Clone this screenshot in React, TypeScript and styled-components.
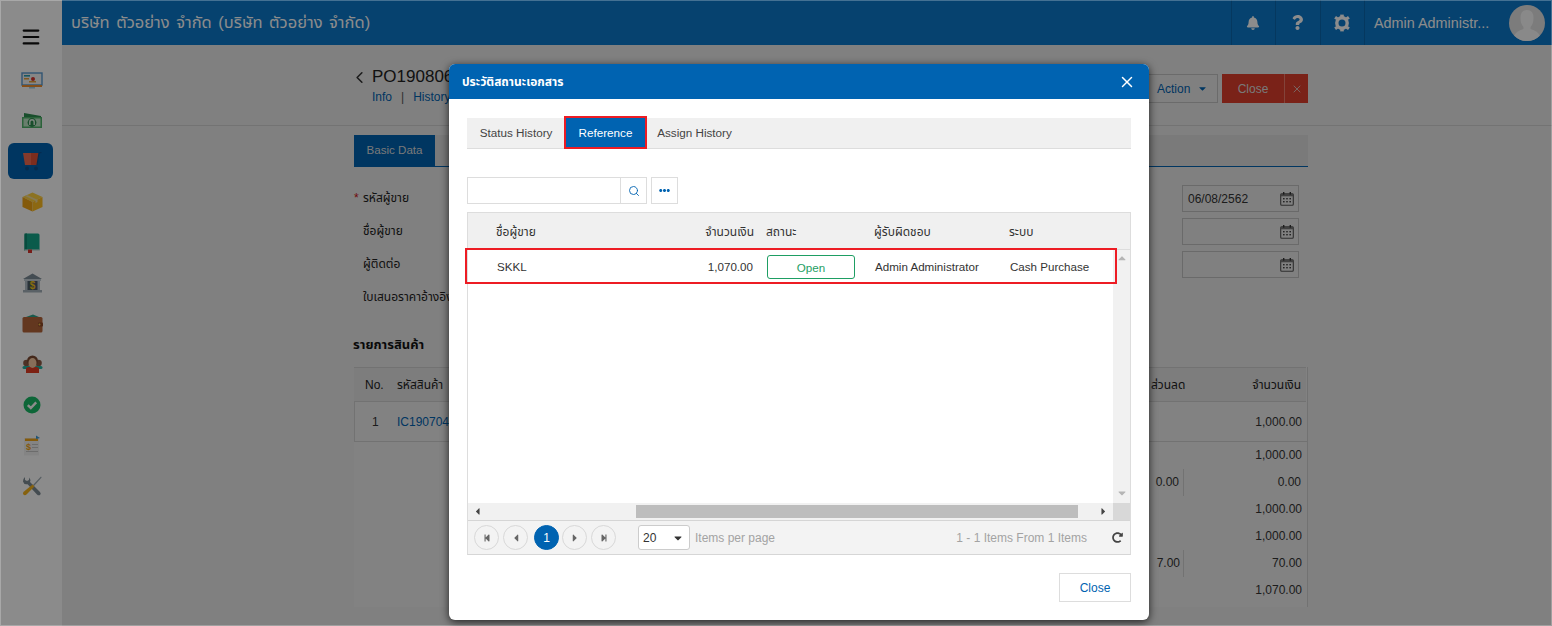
import React from "react";
import styled, { createGlobalStyle } from "styled-components";
import { FaBell, FaQuestion, FaEllipsisH, FaCaretDown, FaRedoAlt, FaStepBackward, FaStepForward, FaCaretLeft, FaCaretRight, FaCaretUp } from "react-icons/fa";
import { X, ChevronLeft, Menu, Search } from "lucide-react";

const Global = createGlobalStyle`
  html, body { margin: 0; padding: 0; background: #e9e9e9; }
  * { box-sizing: border-box; }
  body { font-family: "Liberation Sans", "Noto Sans Thai", "Noto Sans", sans-serif; font-size: 12px; color: #333; }
`;

const Root = styled.div`position: relative; width: 1552px; height: 626px; overflow: hidden; display: flex; background: #e9e9e9;`;
const Sidebar = styled.nav`width: 62px; height: 100%; flex: none; background: #fdfdfd; display: flex; flex-direction: column; align-items: flex-start; padding: 26px 0 0 8px;`;
const MenuButton = styled.div`height: 34px; width: 46px; display: flex; align-items: flex-start; justify-content: center; color: #111;`;
const NavItem = styled.div<{ $active?: boolean }>`
  width: 45px; height: 40.6px; display: flex; align-items: center; justify-content: center; position: relative;
  &::before { content: ""; display: ${p => (p.$active ? "block" : "none")}; position: absolute; inset: 2.3px 0; background: #0063b1; border-radius: 6px; }
  svg { position: relative; margin-left: 3px; }
`;
const Main = styled.div`flex: 1; min-width: 0; display: flex; flex-direction: column;`;
const TopBar = styled.header`height: 45px; background: #0b78ca; display: flex; align-items: center; color: #fff;`;
const BrandTitle = styled.div`flex: 1; padding-left: 9px; font-size: 16.5px; word-spacing: 2px; white-space: nowrap;`;
const TopCell = styled.div`width: 44.5px; height: 100%; border-left: 1px solid #0a66ad; display: flex; align-items: center; justify-content: center; font-size: 17px;`;
const UserCell = styled.div`height: 100%; border-left: 1px solid #0a66ad; display: flex; align-items: center; padding: 0 7px 0 9px; width: 188px; justify-content: space-between; font-size: 14.4px;`;
const Avatar = styled.div`width: 36px; height: 36px; border-radius: 50%; background: #e2e2e2; overflow: hidden; flex: none;`;

const PageHead = styled.div`height: 81px; flex: none; border-bottom: 1px solid #d2d2d2; padding: 29px 244px 0 292px; display: flex; justify-content: space-between; align-items: flex-start;`;
const HeadLeft = styled.div`display: flex; align-items: flex-start; gap: 3px;`;
const BackIcon = styled.div`color: #333; margin-top: -6px; margin-left: -4px;`;
const DocTitle = styled.div`font-size: 17px; line-height: 24px; color: #222; margin-top: -9px;`;
const DocLinks = styled.div`font-size: 12px; line-height: 16px; color: #0063b1; margin-top: 0; span { color: #555; margin: 0 9px; }`;
const HeadActions = styled.div`display: flex; align-items: stretch; height: 29px;`;
const ActionBtn = styled.div`width: 70px; padding-left: 8px; border: 1px solid #c4c4c4; display: flex; align-items: center; gap: 7px; color: #0063b1; margin-right: 4px;`;
const CloseBtn = styled.div`width: 62px; background: #de3f2c; color: #ddd; display: flex; align-items: center; justify-content: center;`;
const CloseX = styled.div`width: 24px; background: #de3f2c; color: #ddd; border-left: 1px solid #ef7a6a; display: flex; align-items: center; justify-content: center;`;

const Content = styled.div`padding: 9px 244px 0 292px; flex: 1; min-height: 0;`;
const TabBar = styled.div`height: 32px; background: #dedede; border-bottom: 1px solid #0063b1; display: flex;`;
const PageTab = styled.div`width: 81px; height: 31px; padding-bottom: 3px; background: #0063b1; color: #ddd; font-size: 11.6px; display: flex; align-items: center; justify-content: center;`;
const Form = styled.div`padding-top: 18px;`;
const FormRow = styled.div`height: 33px; display: flex; justify-content: space-between; padding-right: 9px;`;
const FieldLabel = styled.div`line-height: 26px; padding-left: 9px; position: relative; color: #222; white-space: nowrap;
  em { position: absolute; left: 0; top: 0; color: #c11; font-style: normal; }`;
const DateInput = styled.div`width: 117px; height: 27px; border: 1px solid #c2c2c2; display: flex; align-items: center; justify-content: space-between; padding: 0 4px 0 5px; color: #333;`;
const SectionTitle = styled.div`font-weight: 700; font-size: 13px; line-height: 16px; color: #111; margin-top: 20px; margin-left: -1px;`;
const Panel = styled.div`margin-top: 14px; height: 240px; border-right: 1px solid #d0d0d0; background: #ededed;`;
const TableHead = styled.div`height: 35px; background: #e3e3e3; border-top: 1px solid #d0d0d0; border-bottom: 1px solid #cfcfcf; display: flex; align-items: center; color: #222; margin-right: 1px;`;
const NoHead = styled.div`width: 43px; padding-left: 11px;`;
const CodeHead = styled.div`flex: 1;`;
const DiscHead = styled.div`width: 60px;`;
const AmtHead = styled.div`width: 95px; text-align: right; padding-right: 5px;`;
const TableRow = styled.div`height: 40px; border-left: 1px solid #cfcfcf; border-bottom: 1px solid #cfcfcf; display: flex; align-items: center; color: #333;`;
const NoCell = styled.div`width: 42px; padding-left: 17px;`;
const CodeCell = styled.div`flex: 1; color: #0063b1;`;
const AmtCell = styled.div`width: 124px; text-align: right; padding-right: 5px;`;
const SumRow = styled.div`height: 27px; padding-bottom: 2px; display: flex; justify-content: flex-end; align-items: center; color: #333;`;
const SumDisc = styled.div<{ $pad: number }>`height: 27px; line-height: 27px; align-self: flex-start; border-right: 1px solid #cfcfcf; padding-right: ${p => p.$pad}px;`;
const SumAmt = styled.div<{ $inset?: number }>`width: 123px; text-align: right; padding-right: ${p => p.$inset ?? 5}px;`;

const Overlay = styled.div`position: absolute; inset: 0; background: rgba(0, 0, 0, 0.45); border: 1px solid rgba(255,255,255,.25);`;
const Modal = styled.section`position: absolute; left: 449px; top: 64px; width: 700px; height: 556px; background: #fff; border-radius: 6px; box-shadow: 0 2px 9px rgba(0,0,0,.75); display: flex; flex-direction: column; overflow: hidden;`;
const ModalHeader = styled.div`height: 35px; flex: none; background: #0063b1; color: #fff; display: flex; align-items: center; justify-content: space-between; padding: 0 13px; font-weight: 700; font-size: 12px;`;
const ModalBody = styled.div`flex: 1; padding: 19px 18px 0; display: flex; flex-direction: column;`;
const ModalTabs = styled.div`height: 31px; flex: none; background: #f0f0f0; border-bottom: 1px solid #ddd; display: flex; padding-left: 13px;`;
const ModalTab = styled.div<{ $active?: boolean; $w: number; $left?: number }>`
  position: relative; width: ${p => p.$w}px; height: 29px; padding-bottom: 1px; margin-left: ${p => p.$left ?? 0}px; font-size: 11.7px; white-space: nowrap; display: flex; align-items: center; justify-content: center; color: ${p => (p.$active ? "#fff" : "#444")};
  background: ${p => (p.$active ? "#0063b1" : "transparent")};
  &::after { content: ""; display: ${p => (p.$active ? "block" : "none")}; position: absolute; inset: -2px -2px -2px -2px; border: 2px solid #ed1c24; }
`;
const Toolbar = styled.div`margin-top: 28px; height: 27px; flex: none; display: flex;`;
const SearchBox = styled.div`width: 153px; border: 1px solid #ddd; border-right: 0;`;
const SearchBtn = styled.div`width: 27px; border: 1px solid #ddd; display: flex; align-items: center; justify-content: center; color: #0063b1;`;
const MoreBtn = styled.div`width: 27px; margin-left: 4px; border: 1px solid #ddd; display: flex; align-items: center; justify-content: center; color: #0063b1; font-size: 11px;`;
const Grid = styled.div`margin-top: 8px; height: 343px; flex: none; border: 1px solid #ddd; border-bottom: 1px solid #d6d6d6; display: flex; flex-direction: column;`;
const GridHead = styled.div`height: 37px; flex: none; padding-top: 2px; background: #f0f0f0; border-bottom: 1px solid #ddd; display: grid; grid-template-columns: 28px 150px 108px 12px 108px 135px 1fr; align-items: center; color: #333;`;
const HeadCell = styled.div<{ $right?: boolean }>`text-align: ${p => (p.$right ? "right" : "left")}; white-space: nowrap;`;
const GridMiddle = styled.div`height: 253px; flex: none; display: flex;`;
const GridRows = styled.div`flex: 1; min-width: 0;`;
const GridRow = styled.div`position: relative; height: 32px; padding-top: 1px; font-size: 11.6px; display: grid; grid-template-columns: 29px 150px 106px 14px 88px 20px 135px 1fr; align-items: center; color: #333;
  &::after { content: ""; position: absolute; inset: -2px -4px -2px -3px; border: 2px solid #ed1c24; z-index: 2; pointer-events: none; }`;
const OwnerCell = styled.div`grid-column: 7;`;
const StatusBadge = styled.div`grid-column: 5; height: 24px; margin-top: 1px; border: 1px solid #1e9e63; border-radius: 3px; color: #1e9e63; display: flex; align-items: center; justify-content: center;`;
const VScroll = styled.div`width: 17px; flex: none; background: #f1f1f1; display: flex; flex-direction: column; justify-content: space-between; align-items: center; padding: 2px 0 4px; color: #b5b5b5; font-size: 12px;`;
const HScrollRow = styled.div`height: 17px; flex: none; display: flex;`;
const HScroll = styled.div`flex: 1; min-width: 0; background: #f1f1f1; display: flex; align-items: center; padding: 0 4px; color: #444; font-size: 11px;`;
const HThumb = styled.div`margin-left: 153px; margin-right: 20px; width: 442px; height: 13px; background: #bdbdbd; flex: none;`;
const ScrollCorner = styled.div`width: 17px; background: #d8d8d8; flex: none;`;
const Pager = styled.div`flex: 1; background: #f3f3f3; border-top: 1px solid #d5d5d5; display: flex; align-items: center; padding: 0 7px 0 6px;`;
const PageCircle = styled.div<{ $active?: boolean; $gap: number }>`width: 25px; height: 25px; border-radius: 50%; flex: none; margin-right: ${p => p.$gap}px; border: 1px solid ${p => (p.$active ? "#0063b1" : "#d8d8d8")}; background: ${p => (p.$active ? "#0063b1" : "transparent")}; color: ${p => (p.$active ? "#fff" : "#666")}; display: flex; align-items: center; justify-content: center; font-size: ${p => (p.$active ? 12 : 8)}px;`;
const PageSelect = styled.div`width: 52px; height: 25px; margin-left: 22px; border: 1px solid #ccc; border-radius: 3px; background: #fff; display: flex; align-items: center; justify-content: space-between; padding: 0 5px 0 4px; color: #333; font-size: 12px;`;
const PerPage = styled.div`margin-left: 5px; color: #a3a3a3;`;
const PageInfo = styled.div`margin-left: auto; margin-right: 1px; color: #a3a3a3;`;
const RefreshIcon = styled.div`margin-left: 24px; color: #444; font-size: 11px; display: flex;`;
const ModalFoot = styled.div`display: flex; justify-content: flex-end; margin-top: 18px;`;
const FootBtn = styled.div`width: 72px; height: 29px; border: 1px solid #ddd; color: #0063b1; display: flex; align-items: center; justify-content: center;`;

const IconMonitor = () => (<svg width="22" height="17" viewBox="0 0 22 17"><rect x="1" y="1" width="20" height="12" fill="#f4f4f4" stroke="#5a9bd0" strokeWidth="1.4"/><rect x="3" y="3" width="6" height="1.6" fill="#2b9fb0"/><rect x="3" y="6" width="5" height="1.5" fill="#e9a13b"/><rect x="8" y="9" width="7" height="1.5" fill="#e9a13b"/><circle cx="12" cy="7" r="2" fill="#d8342c"/><rect x="1" y="13" width="20" height="2" fill="#ef8f2f"/><rect x="8" y="15" width="6" height="1.5" fill="#9fd0e8"/></svg>);
const IconMoney = () => (<svg width="22" height="17" viewBox="0 0 22 17"><path d="M3 1 L20 4 V7 H3Z" fill="#2f8f50"/><rect x="1" y="5" width="20" height="11" fill="#4fb36a"/><rect x="2.5" y="6.5" width="17" height="8" fill="#bfe6c6"/><circle cx="11" cy="10.5" r="4.4" fill="#2f8f50"/><path d="M8.8 13 V10 a2.2 2.2 0 0 1 4.4 0 V13" fill="none" stroke="#e6f5e8" strokeWidth="1.4"/></svg>);
const IconCart = () => (<svg width="20" height="19" viewBox="0 0 20 19"><path d="M1 1 H17 L15 13 H3Z" fill="#f26b50"/><path d="M9 1 H17 L15 13 H9Z" fill="#e25238"/><path d="M15 13 L17 1 L19.5 0.5" stroke="#0a4f8f" fill="none" strokeWidth="1.2"/><rect x="2.5" y="13" width="13" height="1.2" fill="#0a5fa8"/><circle cx="5" cy="16.5" r="2" fill="#0a4f8f"/><circle cx="14" cy="16.5" r="2" fill="#0a4f8f"/></svg>);
const IconBox = () => (<svg width="21" height="20" viewBox="0 0 21 20"><path d="M10.5 0.5 L20.5 5 L10.5 10 L0.5 5Z" fill="#ffd23f"/><path d="M0.5 5 L10.5 10 V19.5 L0.5 15Z" fill="#f0a414"/><path d="M20.5 5 L10.5 10 V19.5 L20.5 15Z" fill="#ffbe21"/><path d="M5 3 L15.5 7.8 V10 L13.5 11 V8.8 L3 4Z" fill="#f3dc9b"/></svg>);
const IconBook = () => (<svg width="16" height="20" viewBox="0 0 16 20"><rect x="0.5" y="0.5" width="15" height="17.5" rx="1.5" fill="#14a689"/><rect x="0.5" y="0.5" width="2.5" height="17.5" fill="#0e8b72"/><rect x="0.5" y="16.5" width="15" height="1.4" fill="#e8e8e8"/><rect x="4" y="16.5" width="4" height="3.5" fill="#d8342c"/></svg>);
const IconBank = () => (<svg width="21" height="20" viewBox="0 0 21 20"><path d="M10.5 0.5 L20 6 H1Z" fill="#7b8a95"/><rect x="2" y="6" width="17" height="2" fill="#c2ccd3"/><rect x="3" y="8" width="15" height="9" fill="#4c5b68"/><rect x="3" y="8" width="2.5" height="9" fill="#b3bfc8"/><rect x="15.5" y="8" width="2.5" height="9" fill="#b3bfc8"/><rect x="1" y="17" width="19" height="2.5" fill="#a4b1ba"/><text x="10.5" y="16" textAnchor="middle" fontSize="10" fontWeight="700" fill="#f5c518" fontFamily="Liberation Sans, sans-serif">$</text></svg>);
const IconWallet = () => (<svg width="21" height="19" viewBox="0 0 21 19"><path d="M4 3 L11 0.5 L17 3 V6 H4Z" fill="#2ea58c"/><rect x="0.5" y="3" width="20" height="15.5" rx="1.5" fill="#b5653a"/><rect x="16" y="8.5" width="5" height="4" rx="1" fill="#8e4a28"/><circle cx="17.5" cy="10.5" r="1" fill="#f2c14e"/></svg>);
const IconPeople = () => (<svg width="21" height="18" viewBox="0 0 21 18"><circle cx="4.5" cy="8" r="3.3" fill="#8c5a44"/><circle cx="16.5" cy="8" r="3.3" fill="#8c5a44"/><rect x="0.5" y="11" width="20" height="3" rx="1.5" fill="#22b5a4"/><path d="M4 18 V14 Q4 12 7 12 H14 Q17 12 17 14 V18Z" fill="#e33c24"/><circle cx="10.5" cy="6" r="5.5" fill="#7c4a32"/><ellipse cx="10.5" cy="8" rx="4" ry="5" fill="#f6c9a2"/></svg>);
const IconCheck = () => (<svg width="18" height="18" viewBox="0 0 18 18"><circle cx="9" cy="9" r="8.5" fill="#19bb66"/><path d="M4.8 9.2 L7.8 12 L13.2 6.4" fill="none" stroke="#fff" strokeWidth="2.4"/></svg>);
const IconInvoice = () => (<svg width="18" height="21" viewBox="0 0 18 21"><rect x="1" y="3" width="15" height="17.5" fill="#f1f1f1"/><rect x="2" y="3.5" width="13" height="2.5" fill="#f0a414"/><path d="M13 0.5 L17 3 L13 4Z" fill="#3c9bd8"/><rect x="9" y="9" width="6" height="1" fill="#c5c5c5"/><rect x="9" y="12" width="6" height="1" fill="#c5c5c5"/><rect x="3" y="16" width="12" height="1" fill="#c5c5c5"/><text x="5.4" y="14.5" textAnchor="middle" fontSize="9" fontWeight="700" fill="#f0a414" fontFamily="Liberation Sans, sans-serif">$</text></svg>);
const IconTools = () => (<svg width="20" height="20" viewBox="0 0 20 20"><path d="M3 1 L3 4 L5 5 L7 4 L7 1.6 Q9 3.5 8 6 L18 16 Q19.5 18 18 19 Q16.4 19.8 15 18.4 L5.6 8.2 Q2 9 1 5.5 Q0.8 3 3 1Z" fill="#7d8b94"/><path d="M19 0.5 L11 9 L12 10 L19.6 1.6Z" fill="#9aa7af"/><path d="M10.6 8.6 L12.4 10.4 L5 18 Q3 20 1.4 18.6 Q0 17 2 15.4 Z" fill="#f5b21d"/></svg>);
const IconCalendar = () => (<svg width="14" height="14" viewBox="0 0 14 14"><rect x="0.7" y="1.7" width="12.6" height="11.6" rx="1" fill="#e9e9e9" stroke="#555" strokeWidth="1.1"/><rect x="0.7" y="1.7" width="12.6" height="2.6" fill="#777"/><rect x="3" y="0" width="1.4" height="2.6" fill="#333"/><rect x="9.6" y="0" width="1.4" height="2.6" fill="#333"/><g fill="#444"><rect x="3" y="6" width="1.6" height="1.4"/><rect x="6.2" y="6" width="1.6" height="1.4"/><rect x="9.4" y="6" width="1.6" height="1.4"/><rect x="3" y="9" width="1.6" height="1.4"/><rect x="6.2" y="9" width="1.6" height="1.4"/><rect x="9.4" y="9" width="1.6" height="1.4"/></g></svg>);
const IconGear = () => (<svg width="18" height="18" viewBox="0 0 18 18"><circle cx="9" cy="9" r="5.2" fill="none" stroke="currentColor" strokeWidth="3.4"/><g fill="currentColor"><path d="M7.2 0.6 H10.8 L10.8 3 H7.2Z"/><path d="M7.2 15 H10.8 V17.4 H7.2Z"/><path d="M1.2 4.6 L3 1.9 L5.2 3.4 L3.4 6.1Z"/><path d="M16.8 4.6 L15 1.9 L12.8 3.4 L14.6 6.1Z"/><path d="M1.2 13.4 L3 16.1 L5.2 14.6 L3.4 11.9Z"/><path d="M16.8 13.4 L15 16.1 L12.8 14.6 L14.6 11.9Z"/></g></svg>);
const AvatarFigure = () => (<svg width="36" height="36" viewBox="0 0 36 36"><path d="M18 5 Q24.5 5 24.5 13 Q24.5 19 21.5 22 V24 Q29 26 31 31 V36 H5 V31 Q7 26 14.5 24 V22 Q11.5 19 11.5 13 Q11.5 5 18 5Z" fill="#fafafa"/></svg>);

const navIcons = [IconMonitor, IconMoney, IconCart, IconBox, IconBook, IconBank, IconWallet, IconPeople, IconCheck, IconInvoice, IconTools];
const fields = ["รหัสผู้ขาย", "ชื่อผู้ขาย", "ผู้ติดต่อ", "ใบเสนอราคาอ้างอิง"];
const dates = ["06/08/2562", "", ""];
const summary: { amt: string; disc?: string; pad?: number; inset?: number }[] = [
  { amt: "1,000.00" }, { amt: "0.00", disc: "0.00", pad: 4, inset: 6 }, { amt: "1,000.00" }, { amt: "1,000.00" }, { amt: "70.00", disc: "7.00", pad: 3 }, { amt: "1,070.00" },
];

export default function App() {
  return (
    <Root>
      <Global />
      <Sidebar>
        <MenuButton><Menu size={22} strokeWidth={2.3} /></MenuButton>
        {navIcons.map((Icon, i) => (
          <NavItem key={i} $active={i === 2}><Icon /></NavItem>
        ))}
      </Sidebar>
      <Main>
        <TopBar>
          <BrandTitle>บริษัท ตัวอย่าง จำกัด (บริษัท ตัวอย่าง จำกัด)</BrandTitle>
          <TopCell><FaBell size={14} /></TopCell>
          <TopCell><FaQuestion size={15} /></TopCell>
          <TopCell><IconGear /></TopCell>
          <UserCell>
            <span>Admin Administr...</span>
            <Avatar><AvatarFigure /></Avatar>
          </UserCell>
        </TopBar>
        <PageHead>
          <HeadLeft>
            <BackIcon><ChevronLeft size={19} /></BackIcon>
            <div>
              <DocTitle>PO1908060001</DocTitle>
              <DocLinks>Info<span>|</span>History</DocLinks>
            </div>
          </HeadLeft>
          <HeadActions>
            <ActionBtn>Action <FaCaretDown size={11} /></ActionBtn>
            <CloseBtn>Close</CloseBtn>
            <CloseX><X size={12} strokeWidth={1.5} /></CloseX>
          </HeadActions>
        </PageHead>
        <Content>
          <TabBar><PageTab>Basic Data</PageTab></TabBar>
          <Form>
            {fields.map((f, i) => (
              <FormRow key={f}>
                <FieldLabel>{i === 0 && <em>*</em>}{f}</FieldLabel>
                {i < 3 && <DateInput>{dates[i]}<span /><IconCalendar /></DateInput>}
              </FormRow>
            ))}
          </Form>
          <SectionTitle>รายการสินค้า</SectionTitle>
          <Panel>
            <TableHead>
              <NoHead>No.</NoHead>
              <CodeHead>รหัสสินค้า</CodeHead>
              <DiscHead>ส่วนลด</DiscHead>
              <AmtHead>จำนวนเงิน</AmtHead>
            </TableHead>
            <TableRow>
              <NoCell>1</NoCell>
              <CodeCell>IC190704-0001</CodeCell>
              <AmtCell>1,000.00</AmtCell>
            </TableRow>
            {summary.map((s, i) => (
              <SumRow key={i}>
                {s.disc && <SumDisc $pad={s.pad ?? 5}>{s.disc}</SumDisc>}
                <SumAmt $inset={s.inset}>{s.amt}</SumAmt>
              </SumRow>
            ))}
          </Panel>
        </Content>
      </Main>
      <Overlay />
      <Modal>
        <ModalHeader>
          <span>ประวัติสถานะเอกสาร</span>
          <X size={18} strokeWidth={2} />
        </ModalHeader>
        <ModalBody>
          <ModalTabs>
            <ModalTab $w={72}>Status History</ModalTab>
            <ModalTab $w={79} $left={14} $active>Reference</ModalTab>
            <ModalTab $w={73} $left={13}>Assign History</ModalTab>
          </ModalTabs>
          <Toolbar>
            <SearchBox />
            <SearchBtn><Search size={12} strokeWidth={1.8} /></SearchBtn>
            <MoreBtn><FaEllipsisH /></MoreBtn>
          </Toolbar>
          <Grid>
            <GridHead>
              <span />
              <HeadCell>ชื่อผู้ขาย</HeadCell>
              <HeadCell $right>จำนวนเงิน</HeadCell>
              <span />
              <HeadCell>สถานะ</HeadCell>
              <HeadCell>ผู้รับผิดชอบ</HeadCell>
              <HeadCell>ระบบ</HeadCell>
            </GridHead>
            <GridMiddle>
              <GridRows>
                <GridRow>
                  <span />
                  <div>SKKL</div>
                  <HeadCell $right>1,070.00</HeadCell>
                  <StatusBadge>Open</StatusBadge>
                  <OwnerCell>Admin Administrator</OwnerCell>
                  <div>Cash Purchase</div>
                </GridRow>
              </GridRows>
              <VScroll><FaCaretUp /><FaCaretDown /></VScroll>
            </GridMiddle>
            <HScrollRow>
              <HScroll>
                <FaCaretLeft />
                <HThumb />
                <FaCaretRight />
              </HScroll>
              <ScrollCorner />
            </HScrollRow>
            <Pager>
              <PageCircle $gap={4}><FaStepBackward /></PageCircle>
              <PageCircle $gap={6}><FaCaretLeft size={12} /></PageCircle>
              <PageCircle $gap={3} $active>1</PageCircle>
              <PageCircle $gap={4}><FaCaretRight size={12} /></PageCircle>
              <PageCircle $gap={0}><FaStepForward /></PageCircle>
              <PageSelect>20 <FaCaretDown size={12} /></PageSelect>
              <PerPage>Items per page</PerPage>
              <PageInfo>1 - 1 Items From 1 Items</PageInfo>
              <RefreshIcon><FaRedoAlt /></RefreshIcon>
            </Pager>
          </Grid>
          <ModalFoot><FootBtn>Close</FootBtn></ModalFoot>
        </ModalBody>
      </Modal>
    </Root>
  );
}
